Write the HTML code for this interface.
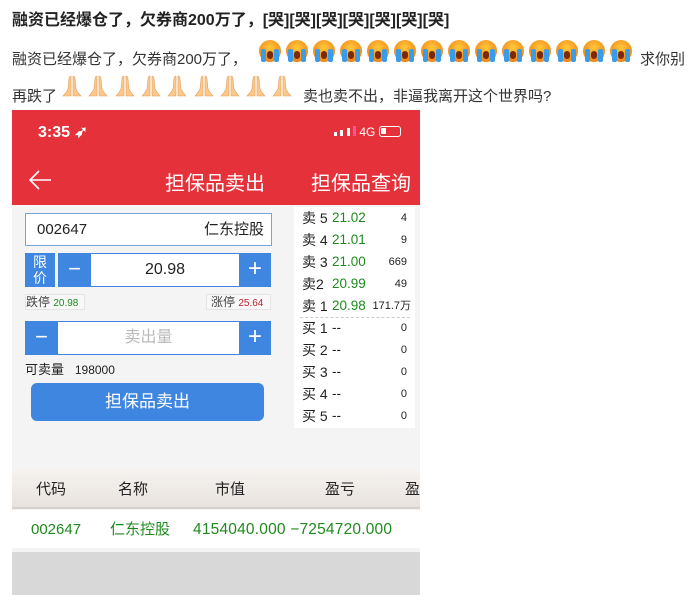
<!DOCTYPE html>
<html><head><meta charset="utf-8"><style>
*{margin:0;padding:0;box-sizing:border-box}
body{width:700px;height:613px;background:#fff;position:relative;overflow:hidden;font-family:"Liberation Sans","Noto Sans CJK SC",sans-serif;color:#222}
.a{position:absolute;white-space:nowrap}
.cry{position:absolute;width:22px;height:22px;border-radius:50%;background:radial-gradient(circle at 50% 35%,#ffc83a,#f28a1a 70%,#e86a10)}
.cry:before,.cry:after{content:"";position:absolute;top:9px;width:5px;height:13px;background:#3a9be8;border-radius:2px}
.cry:before{left:2px}.cry:after{right:2px}
.cry i{position:absolute;left:8px;top:11px;width:6px;height:8px;background:#7a2a08;border-radius:3px}
.pray{position:absolute;width:20px;height:23px}
.blue{background:#3f86e0;color:#fff;text-align:center}
.ob{font-size:14px}
.ob>div{height:22px;line-height:22px}
.ob .l{position:absolute;left:8px}
.ob .p{position:absolute;left:38px;color:#1e8a1e;font-size:13.5px}
.ob .v{position:absolute;right:8px;font-size:11px}
.row{line-height:20px}
</style></head><body>
<div class="a" style="left:12px;top:6px;font-size:16px;font-weight:bold">融资已经爆仓了，欠券商200万了，[哭][哭][哭][哭][哭][哭][哭]</div>
<div class="a" style="left:12px;top:48px;font-size:15px;color:#333">融资已经爆仓了，欠券商200万了，</div>
<div class="a" style="left:640px;top:48px;font-size:15px;color:#333">求你别</div>
<div class="a" style="left:12px;top:85px;font-size:15px;color:#333">再跌了</div>
<div class="a" style="left:303px;top:85px;font-size:15px;color:#333">卖也卖不出，非逼我离开这个世界吗?</div>
<div id="cries"></div>
<div id="prays"></div>
<script>
var c='';for(var i=0;i<14;i++)c+='<div class="cry" style="left:'+(259+i*27)+'px;top:40px"><i></i></div>';
document.getElementById('cries').innerHTML=c;
var p='';for(var i=0;i<9;i++)p+='<svg class="pray" style="left:'+(62+i*26.3)+'px;top:75px" viewBox="0 0 20 23"><path d="M9 1 Q7 1 7 4 L6 14 Q4 18 1 21 L9 21 Z" fill="#fcc98a" stroke="#e0a060" stroke-width=".6"/><path d="M11 1 Q13 1 13 4 L14 14 Q16 18 19 21 L11 21 Z" fill="#fcc98a" stroke="#e0a060" stroke-width=".6"/></svg>';
document.getElementById('prays').innerHTML=p;
</script>
<div class="a" style="left:12px;top:110px;width:408px;height:485px;background:#f4f4f4;overflow:hidden">
 <div class="a" style="left:0;top:0;width:408px;height:95px;background:#e5323a"></div>
 <div class="a" style="left:26px;top:12px;color:#fff;font-size:16px;font-weight:bold">3:35 ➶</div>
 <div class="a" style="left:322px;top:15px;color:#fff;font-size:12px">
  <span style="display:inline-block;width:3px;height:4px;background:#fff"></span>
  <span style="display:inline-block;width:3px;height:6px;background:#fff"></span>
  <span style="display:inline-block;width:3px;height:8px;background:#fff"></span>
  <span style="display:inline-block;width:3px;height:10px;background:#f59"></span> 4G
  <span style="display:inline-block;width:22px;height:11px;border:1.5px solid #fff;border-radius:3px;vertical-align:-1px;position:relative"><span style="position:absolute;left:1px;top:1px;width:5px;height:6px;background:#fff"></span></span>
 </div>
 <svg class="a" style="left:16px;top:60px" width="24" height="20" viewBox="0 0 24 20"><path d="M23 10H2M11 1L2 10L11 19" stroke="#fff" stroke-width="1.6" fill="none"/></svg>
 <div class="a" style="left:153px;top:57px;color:#fff;font-size:20px">担保品卖出</div>
 <div class="a" style="left:299px;top:57px;color:#fff;font-size:20px">担保品查询</div>

 <div class="a" style="left:13px;top:103px;width:247px;height:33px;background:#fff;border:1.5px solid #7aa3dd"></div>
 <div class="a row" style="left:25px;top:110px;font-size:15px">002647</div>
 <div class="a row" style="left:192px;top:110px;font-size:15px">仁东控股</div>

 <div class="a blue" style="left:13px;top:143px;width:30px;height:34px;font-size:14px;line-height:16px;padding-top:1px">限<br>价</div>
 <div class="a blue" style="left:46px;top:143px;width:33px;height:34px;font-size:22px;line-height:32px">−</div>
 <div class="a" style="left:79px;top:143px;width:148px;height:34px;background:#fff;border-top:1px solid #3f86e0;border-bottom:1px solid #3f86e0;text-align:center;font-size:16px;line-height:32px">20.98</div>
 <div class="a blue" style="left:227px;top:143px;width:32px;height:34px;font-size:24px;line-height:32px">+</div>

 <div class="a" style="left:13px;top:184px;width:60px;height:16px;background:#f8f8f8;border:1px solid #e4e4e4;font-size:12px;line-height:14px;color:#444">跌停 <span style="color:#1e8a1e;font-size:10px">20.98</span></div>
 <div class="a" style="left:194px;top:184px;width:65px;height:16px;background:#f8f8f8;border:1px solid #e4e4e4;font-size:12px;line-height:14px;color:#444;padding-left:4px">涨停 <span style="color:#c02030;font-size:10px">25.64</span></div>

 <div class="a blue" style="left:13px;top:211px;width:33px;height:34px;font-size:22px;line-height:32px">−</div>
 <div class="a" style="left:46px;top:211px;width:181px;height:34px;background:#fff;border-top:1px solid #3f86e0;border-bottom:1px solid #3f86e0;text-align:center;font-size:16px;line-height:32px;color:#bbb">卖出量</div>
 <div class="a blue" style="left:227px;top:211px;width:32px;height:34px;font-size:24px;line-height:32px">+</div>

 <div class="a row" style="left:13px;top:250px;font-size:13px">可卖量 &nbsp;&nbsp;<span style="font-size:12px">198000</span></div>
 <div class="a blue" style="left:19px;top:273px;width:233px;height:38px;border-radius:6px;font-size:17px;line-height:37px">担保品卖出</div>

 <div class="a ob" style="left:282px;top:97px;width:121px;height:221px;background:#fff">
  <div class="a" style="top:0px;width:121px"><span class="l">卖 5</span><span class="p">21.02</span><span class="v">4</span></div>
  <div class="a" style="top:22px;width:121px"><span class="l">卖 4</span><span class="p">21.01</span><span class="v">9</span></div>
  <div class="a" style="top:44px;width:121px"><span class="l">卖 3</span><span class="p">21.00</span><span class="v">669</span></div>
  <div class="a" style="top:66px;width:121px"><span class="l">卖2</span><span class="p">20.99</span><span class="v">49</span></div>
  <div class="a" style="top:88px;width:121px"><span class="l">卖 1</span><span class="p">20.98</span><span class="v" style="right:4px">171.7万</span></div>
  <div class="a" style="top:110px;left:6px;width:110px;height:0;border-top:1px dashed #ccc"></div>
  <div class="a" style="top:110px;width:121px"><span class="l">买 1</span><span class="p" style="color:#222">--</span><span class="v">0</span></div>
  <div class="a" style="top:132px;width:121px"><span class="l">买 2</span><span class="p" style="color:#222">--</span><span class="v">0</span></div>
  <div class="a" style="top:154px;width:121px"><span class="l">买 3</span><span class="p" style="color:#222">--</span><span class="v">0</span></div>
  <div class="a" style="top:176px;width:121px"><span class="l">买 4</span><span class="p" style="color:#222">--</span><span class="v">0</span></div>
  <div class="a" style="top:198px;width:121px"><span class="l">买 5</span><span class="p" style="color:#222">--</span><span class="v">0</span></div>
 </div>

 <div class="a" style="left:0;top:358px;width:408px;height:41px;background:linear-gradient(#f6f3f0,#e8e3df);border-bottom:2px solid #d5d0cc"></div>
 <div class="a row" style="left:24px;top:370px;font-size:15px">代码</div>
 <div class="a row" style="left:106px;top:370px;font-size:15px">名称</div>
 <div class="a row" style="left:203px;top:370px;font-size:15px">市值</div>
 <div class="a row" style="left:313px;top:370px;font-size:15px">盈亏</div>
 <div class="a row" style="left:393px;top:370px;font-size:15px">盈</div>
 <div class="a" style="left:0;top:400px;width:408px;height:38px;background:#fff"></div>
 <div class="a row" style="left:19px;top:410px;font-size:15px;color:#1e8a1e">002647</div>
 <div class="a row" style="left:98px;top:410px;font-size:15px;color:#1e8a1e">仁东控股</div>
 <div class="a row" style="left:181px;top:410px;font-size:15.5px;color:#1e8a1e;letter-spacing:0.2px">4154040.000 −7254720.000</div>
 <div class="a" style="left:0;top:442px;width:408px;height:43px;background:#d8d8d8"></div>
</div>
</body></html>
